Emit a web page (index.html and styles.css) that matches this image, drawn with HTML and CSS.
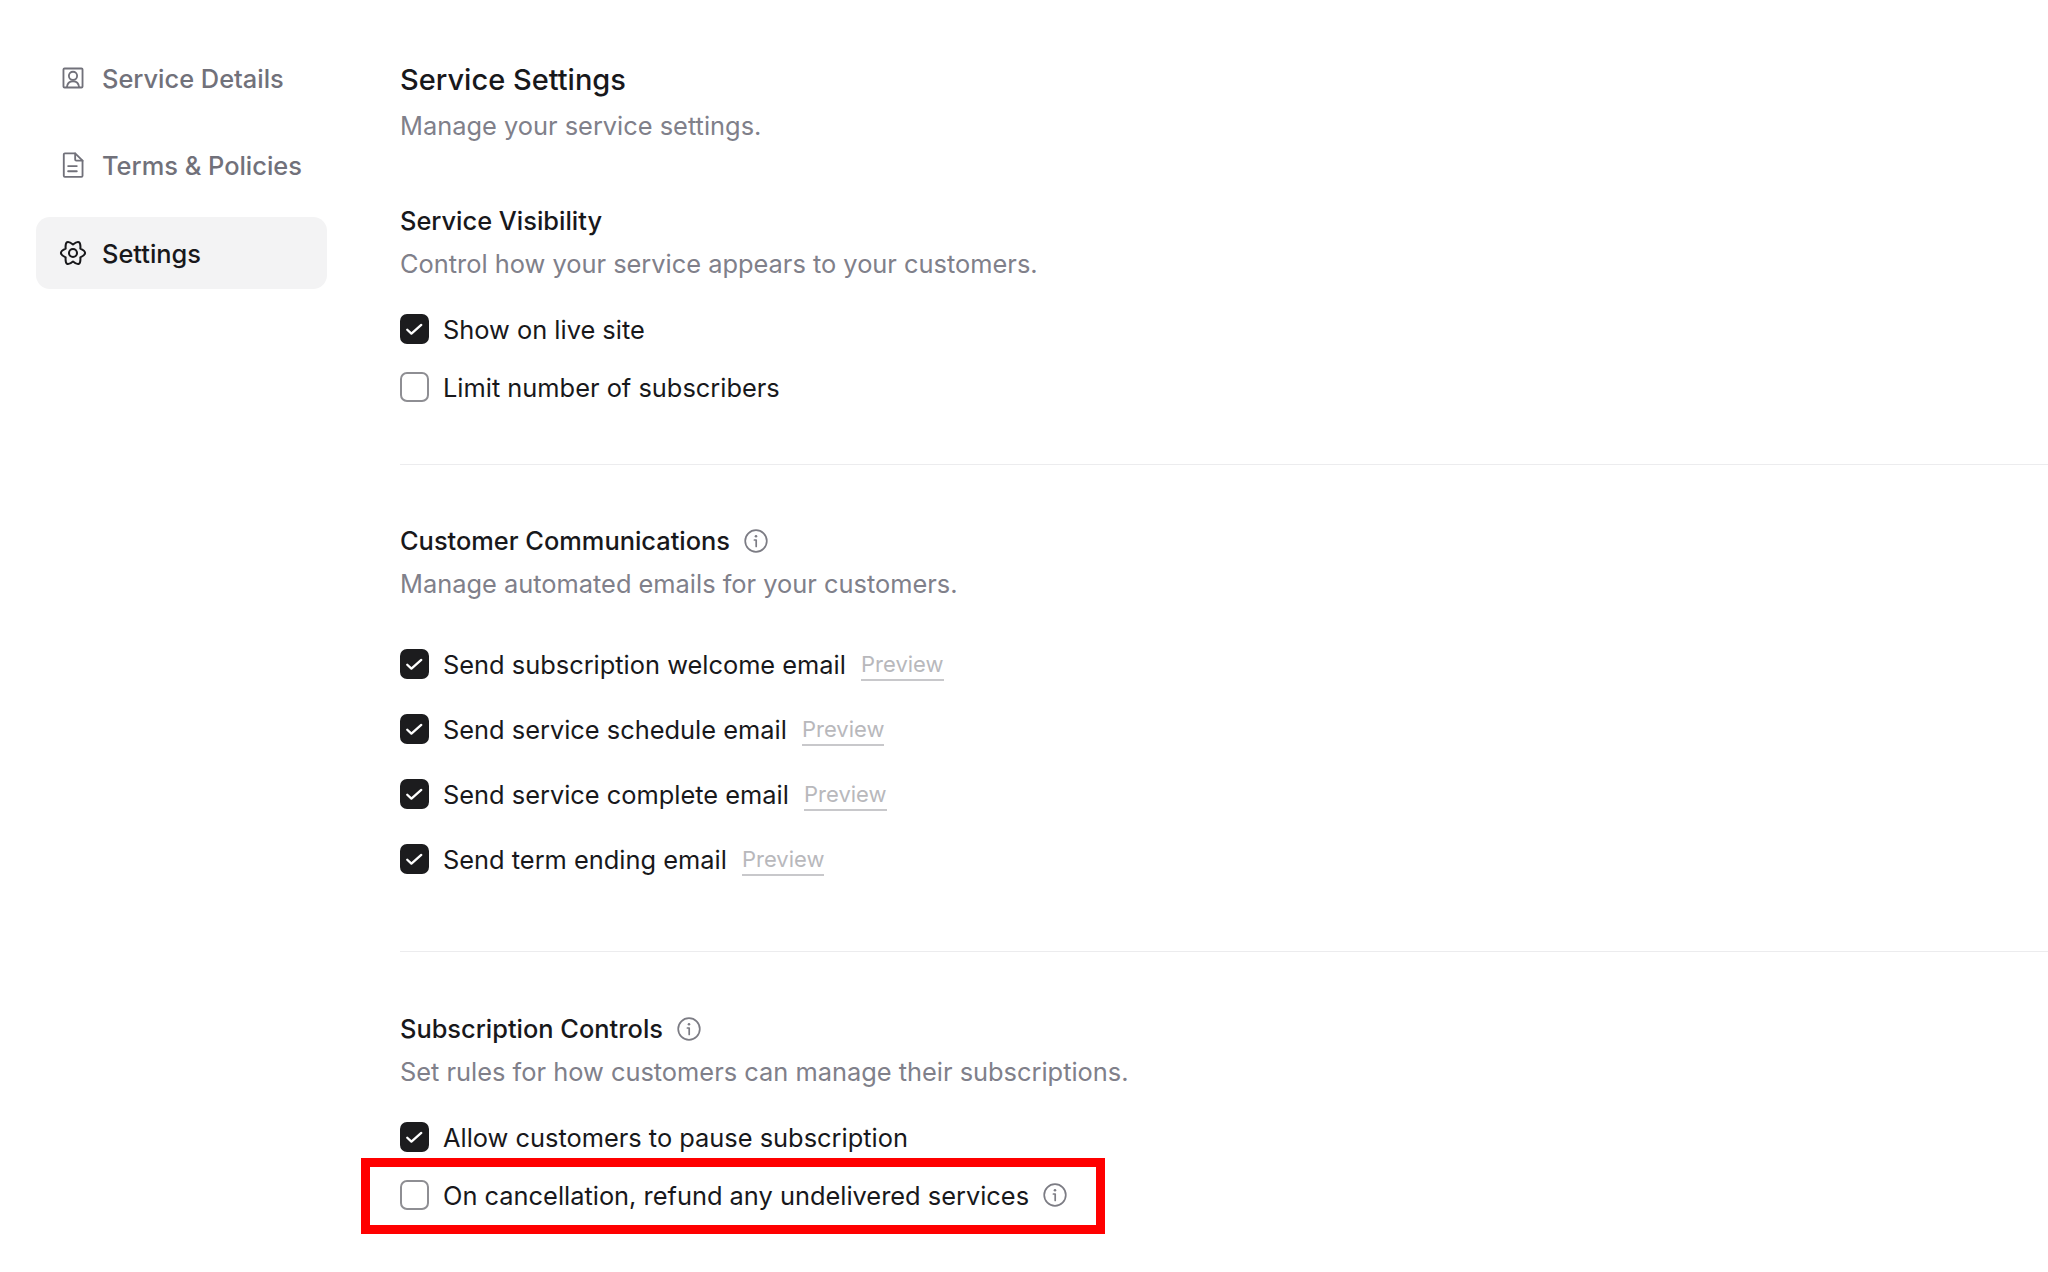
FILE: index.html
```html
<!DOCTYPE html>
<html lang="en">

<head>
    <meta charset="UTF-8">
    <meta name="viewport" content="width=device-width, initial-scale=1.0">
    <title>Service Settings</title>
    <link rel="stylesheet" href="styles.css">
</head>

<body>
    <svg class="icon-defs" width="0" height="0">
        <symbol id="check" viewBox="0 0 30 30">
            <path d="M7.500 15.800l4.300 4 10.200-9" fill="none" stroke="#fff" stroke-width="2.400" stroke-linecap="round" stroke-linejoin="round" />
        </symbol>
        <symbol id="info" viewBox="0 0 24 24">
            <circle cx="12" cy="12" r="10.800" fill="none" stroke="currentColor" stroke-width="1.700" />
            <path d="M10.400 11h1.800v6.500" fill="none" stroke="currentColor" stroke-width="1.700" stroke-linecap="round" stroke-linejoin="round" />
            <circle cx="12" cy="7.200" r="1.300" fill="currentColor" />
        </symbol>
    </svg>

    <div class="page">
        <nav class="sidebar">
            <a class="nav-item">
                <svg class="nav-icon" viewBox="0 0 24 24" fill="none" stroke="currentColor" stroke-width="1.700" stroke-linejoin="round">
                    <rect x="3.200" y="3.200" width="17.600" height="17.600" rx="1" />
                    <circle cx="12" cy="10" r="3.800" />
                    <path d="M6.300 20.800c.4-3.800 2.700-5.800 5.700-5.800s5.300 2 5.700 5.800" />
                </svg>
                Service Details
            </a>
            <a class="nav-item">
                <svg class="nav-icon" viewBox="0 0 24 24" fill="none" stroke="currentColor" stroke-width="1.700" stroke-linejoin="round" stroke-linecap="round">
                    <path d="M4.500 1.200h9.500l6.800 6.800v14a1 1 0 0 1-1 1H4.500a1 1 0 0 1-1-1V2.200a1 1 0 0 1 1-1z" />
                    <path d="M14 1.200v5.800a1 1 0 0 0 1 1h5.800M7.500 13h8M7.500 17.800h8" />
                </svg>
                Terms &amp; Policies
            </a>
            <a class="nav-item active">
                <svg class="nav-icon" viewBox="0 0 24 24" fill="none" stroke="currentColor" stroke-width="1.900" stroke-linejoin="round">
                    <circle cx="12" cy="12" r="3.700" />
                    <path d="M12 4.200Q19.500-2 18.800 8 27.500 12 18.800 16 19.500 26 12 19.800 4.500 26 5.200 16-3.500 12 5.200 8 4.500-2 12 4.200z" />
                </svg>
                Settings
            </a>
        </nav>

        <main class="content">
            <h1>Service Settings</h1>
            <p class="desc">Manage your service settings.</p>

            <section class="group group-visibility">
                <h2>Service Visibility</h2>
                <p class="desc">Control how your service appears to your customers.</p>
                <div class="options">
                    <div class="option"><span class="box checked"><svg><use href="#check" /></svg></span>Show on live site</div>
                    <div class="option"><span class="box"></span>Limit number of subscribers</div>
                </div>
            </section>

            <section class="group group-comms">
                <h2>Customer Communications <svg class="info"><use href="#info" /></svg></h2>
                <p class="desc">Manage automated emails for your customers.</p>
                <div class="options">
                    <div class="option"><span class="box checked"><svg><use href="#check" /></svg></span>Send subscription welcome email <a class="preview">Preview</a></div>
                    <div class="option"><span class="box checked"><svg><use href="#check" /></svg></span>Send service schedule email <a class="preview">Preview</a></div>
                    <div class="option"><span class="box checked"><svg><use href="#check" /></svg></span>Send service complete email <a class="preview">Preview</a></div>
                    <div class="option"><span class="box checked"><svg><use href="#check" /></svg></span>Send term ending email <a class="preview">Preview</a></div>
                </div>
            </section>

            <section class="group group-controls">
                <h2>Subscription Controls <svg class="info"><use href="#info" /></svg></h2>
                <p class="desc">Set rules for how customers can manage their subscriptions.</p>
                <div class="options">
                    <div class="option"><span class="box checked"><svg><use href="#check" /></svg></span>Allow customers to pause subscription</div>
                    <div class="option highlighted"><span class="box"></span>On cancellation, refund any undelivered services <svg class="info"><use href="#info" /></svg></div>
                </div>
            </section>
        </main>
    </div>
</body>

</html>
```

FILE: styles.css
```css
*,
*::after {
    box-sizing: border-box;
}

html,
body {
    margin: 0;
    height: 100%;
    overflow: hidden;
}

body {
    font-family: Inter, "Noto Sans", sans-serif;
    background: #fff;
    color: #18181b;
}

.icon-defs {
    display: block;
    height: 0;
}

.page {
    display: flex;
    align-items: flex-start;
}

.sidebar {
    width: 400px;
    flex: none;
    padding: 42px 73px 0 36px;
    display: flex;
    flex-direction: column;
    gap: 15px;
}

.nav-item {
    height: 72px;
    padding: 0 24px;
    display: flex;
    align-items: center;
    gap: 16px;
    border-radius: 14px;
    font-size: 25.4px;
    font-weight: 500;
    color: #71717a;
    white-space: nowrap;
}

.nav-item.active {
    margin-top: 1px;
    background: #f3f3f4;
    color: #18181b;
}

.nav-icon {
    width: 26px;
    height: 26px;
    flex: none;
    overflow: visible;
}

.content {
    flex: 1;
    padding-top: 62px;
}

h1 {
    margin: 0 0 10px;
    font-size: 29px;
    line-height: 36px;
    font-weight: 500;
}

h2 {
    margin: 0 0 7px;
    display: flex;
    align-items: center;
    gap: 14px;
    font-size: 25.4px;
    line-height: 36px;
    font-weight: 500;
}

.desc {
    margin: 0;
    font-size: 25.4px;
    line-height: 36px;
    color: #80808a;
}

.group {
    border-bottom: 1px solid #ececee;
}

.group-visibility {
    margin-top: 59px;
    height: 262px;
}

.group-comms {
    padding-top: 58px;
    height: 487px;
}

.group-controls {
    padding-top: 59px;
    border-bottom: none;
}

.options {
    display: flex;
    flex-direction: column;
    margin-top: 27px;
    gap: 18px;
}

.group-comms .options {
    margin-top: 42px;
    gap: 25px;
}

.group-controls .options {
    margin-top: 27px;
    gap: 18px;
}

.option {
    height: 40px;
    display: flex;
    align-items: center;
    font-size: 25.4px;
    white-space: pre;
}

.box {
    width: 29px;
    height: 30px;
    flex: none;
    margin-right: 14px;
    border: 2px solid #8e8e93;
    border-radius: 7px;
    background: #fff;
}

.box.checked {
    background: #1c1c1e;
    border-color: #1c1c1e;
}

.box svg {
    display: block;
    width: 29px;
    height: 30px;
    margin: -2px;
}

.preview {
    margin: 2px 0 0 8px;
    font-size: 22px;
    line-height: 30px;
    color: #b8b8bc;
    border-bottom: 2px solid #c8c8cb;
}

.info {
    width: 24px;
    height: 24px;
    flex: none;
    color: #7c7c84;
}

.highlighted {
    position: relative;
}

.highlighted .info {
    margin-left: 7px;
}

.highlighted::after {
    content: "";
    position: absolute;
    left: -39px;
    top: -17px;
    width: 744px;
    height: 76px;
    border: 9px solid #ff0000;
}
```
